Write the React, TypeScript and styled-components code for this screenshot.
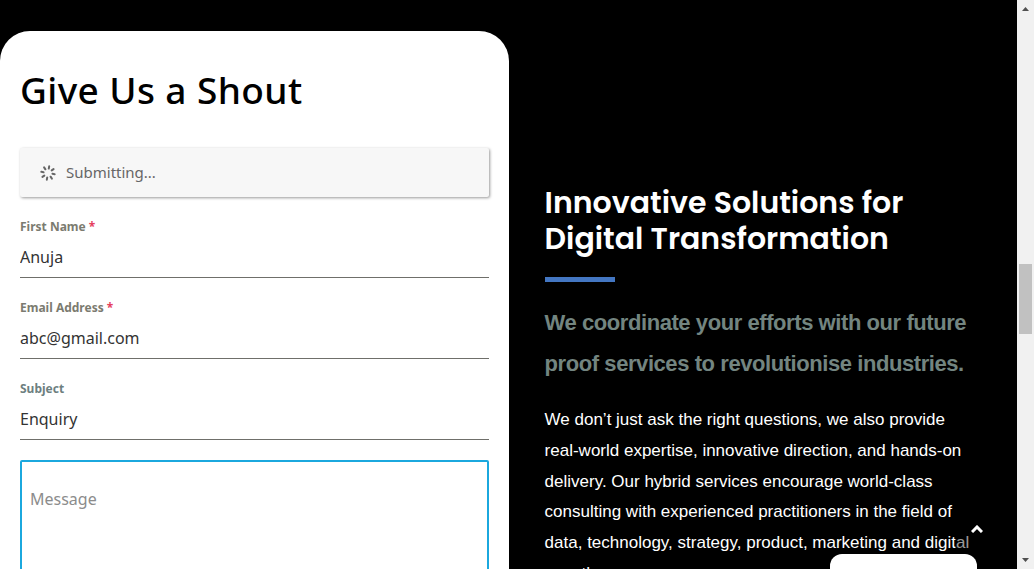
import React from 'react';
import styled, { createGlobalStyle } from 'styled-components';

const Global = createGlobalStyle`
  * { box-sizing: border-box; }
  body { margin: 0; background: #000; overflow: hidden; }
  h1, h2, h3, p { margin: 0; }
`;

const Page = styled.div`
  display: flex;
  height: 569px;
  overflow: hidden;
  background: #000;
  position: relative;
`;

const FormCard = styled.form`
  width: 509px;
  height: 700px;
  flex: none;
  margin-top: 31px;
  padding: 33px 20px 0;
  background: #fff;
  border-radius: 30px 30px 0 0;
  font-family: 'Noto Sans', sans-serif;
`;

const FormTitle = styled.h1`
  font-size: 37px;
  font-weight: 500;
  line-height: 52px;
  letter-spacing: 0.4px;
  color: #000;
  white-space: nowrap;
`;

const Status = styled.div`
  display: flex;
  align-items: center;
  gap: 10px;
  width: 469px;
  height: 49px;
  margin-top: 32px;
  padding-left: 20px;
  background: #f7f7f7;
  border-radius: 2px;
  box-shadow: 1px 1px 3px rgba(0, 0, 0, 0.4);
  font-size: 15px;
  color: #666;
`;

const StatusText = styled.span`
  padding-bottom: 2px;
`;

const Field = styled.label`
  display: flex;
  flex-direction: column;
  height: 81px;
  padding-top: 21px;
`;

const FieldName = styled.span<{ $color?: string }>`
  font-size: 12px;
  font-weight: 700;
  line-height: 18px;
  color: ${(p) => p.$color ?? '#7b7b70'};
`;

const Required = styled.span`
  color: #e5405e;
`;

const Input = styled.input`
  width: 469px;
  height: 42px;
  padding: 0;
  border: 0;
  border-bottom: 1px solid #6f6f6a;
  outline: 0;
  background: transparent;
  font: 400 16px 'Noto Sans', sans-serif;
  color: #333;
`;

const Message = styled.textarea`
  display: block;
  width: 469px;
  height: 200px;
  margin-top: 20px;
  padding: 26px 8px;
  border: 2px solid #1ba8de;
  border-radius: 2px;
  outline: 0;
  resize: none;
  font: 400 16px/22px 'Noto Sans', sans-serif;
  &::placeholder { color: #8c8c8c; }
`;

const Intro = styled.section`
  flex: 1;
  padding: 185px 0 0 35.6px;
  white-space: nowrap;
  color: #fff;
`;

const IntroTitle = styled.h2`
  font: 600 30px/36px Poppins, Inter, sans-serif;
`;

const Rule = styled.div`
  width: 70px;
  height: 5px;
  margin-top: 20px;
  background: #4376c2;
`;

const Lead = styled.h3`
  margin-top: 20px;
  font: 700 22px/41px 'Liberation Sans', Arial, sans-serif;
  letter-spacing: -0.43px;
  color: #738580;
`;

const Body = styled.p`
  margin-top: 20px;
  font: 400 17px/30.75px 'Liberation Sans', Arial, sans-serif;
  padding-top: 1.1px;
`;

const Scrollbar = styled.div`
  display: flex;
  flex-direction: column;
  align-items: center;
  width: 17px;
  flex: none;
  background: #f1f1f1;
`;

const Arrow = styled.svg`
  width: 17px;
  height: 17px;
  fill: #505050;
`;

const Thumb = styled.div`
  width: 13px;
  height: 70px;
  margin: 247px 0 218px;
  background: #c1c1c1;
`;

const BackToTop = styled.button`
  position: absolute;
  left: 955px;
  top: 507px;
  display: grid;
  place-items: center;
  width: 44px;
  height: 44px;
  padding: 0;
  border: 0;
  background: rgba(0, 0, 0, 0.4);
`;

const ChatTab = styled.div`
  position: absolute;
  left: 830px;
  top: 554px;
  width: 147px;
  height: 40px;
  border-radius: 12px;
  background: #fff;
`;

function Spinner() {
  return (
    <svg width="16" height="16" viewBox="0 0 16 16" stroke="#666" strokeWidth="2" strokeLinecap="round">
      {[10, 55, 100, 145, 190, 235, 280, 325].map((a) => (
        <path key={a} d="M8 1.2v2.3" transform={`rotate(${a} 8 8)`} />
      ))}
    </svg>
  );
}

export default function App() {
  return (
    <>
      <Global />
      <Page>
        <FormCard>
          <FormTitle>Give Us a Shout</FormTitle>
          <Status><Spinner /><StatusText>Submitting...</StatusText></Status>
          <Field>
            <FieldName>First Name <Required>*</Required></FieldName>
            <Input defaultValue="Anuja" />
          </Field>
          <Field>
            <FieldName>Email Address <Required>*</Required></FieldName>
            <Input defaultValue="abc@gmail.com" />
          </Field>
          <Field>
            <FieldName $color="#6d7f7f">Subject</FieldName>
            <Input defaultValue="Enquiry" />
          </Field>
          <Message placeholder="Message" />
        </FormCard>
        <Intro>
          <IntroTitle>
            Innovative Solutions for<br />
            Digital Transformation
          </IntroTitle>
          <Rule />
          <Lead>
            We coordinate your efforts with our future<br />
            proof services to revolutionise industries.
          </Lead>
          <Body>
            We don’t just ask the right questions, we also provide<br />
            real-world expertise, innovative direction, and hands-on<br />
            delivery. Our hybrid services encourage world-class<br />
            consulting with experienced practitioners in the field of<br />
            data, technology, strategy, product, marketing and digital<br />
            growth.
          </Body>
        </Intro>
        <Scrollbar>
          <Arrow viewBox="0 0 17 17"><path d="M5 11h7L8.5 7z" /></Arrow>
          <Thumb />
          <Arrow viewBox="0 0 17 17"><path d="M5 6h7L8.5 10z" /></Arrow>
        </Scrollbar>
        <BackToTop aria-label="Back to top">
          <svg width="12" height="8" viewBox="0 0 12 8" fill="none" stroke="#fff" strokeWidth="3">
            <path d="M1 7l5-5 5 5" />
          </svg>
        </BackToTop>
        <ChatTab />
      </Page>
    </>
  );
}
